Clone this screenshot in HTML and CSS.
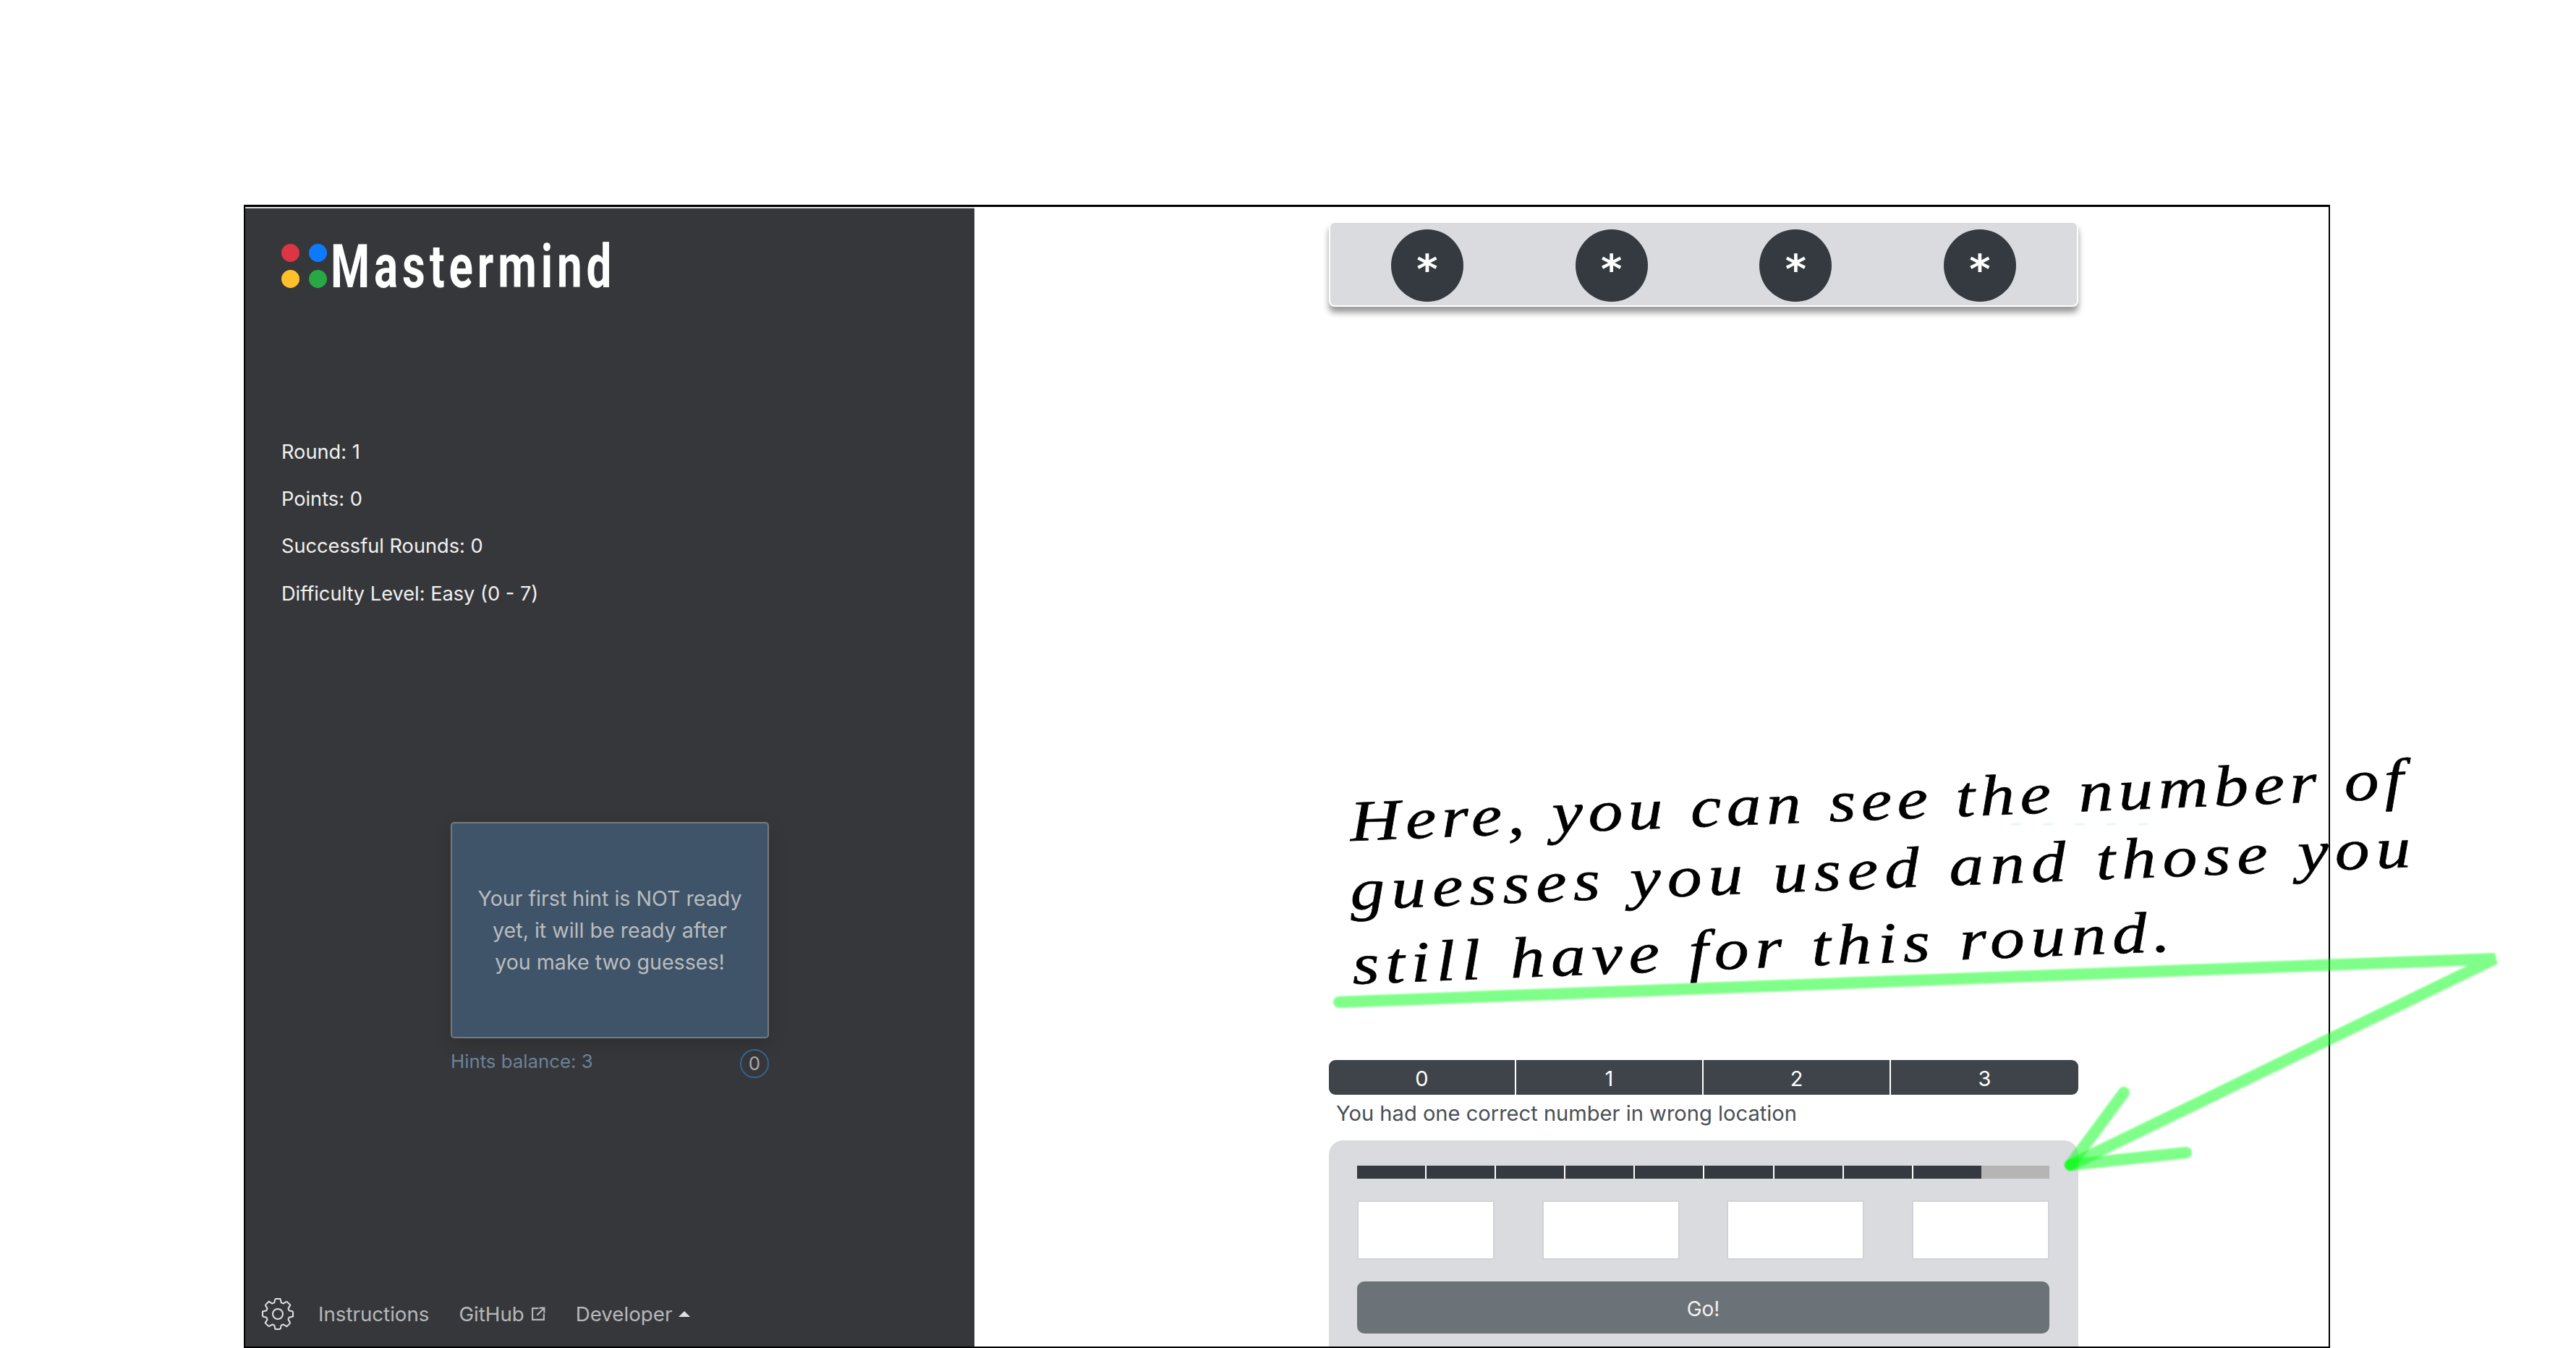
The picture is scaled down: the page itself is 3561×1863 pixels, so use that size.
FILE: index.html
```html
<!DOCTYPE html>
<html lang="en">
<head>
<meta charset="utf-8">
<title>Mastermind</title>
<link rel="stylesheet" href="styles.css">
</head>
<body>
<div class="frame">
  <aside class="sidebar">
    <div class="brand">
      <div class="dots">
        <span class="dot red"></span><span class="dot blue"></span>
        <span class="dot yellow"></span><span class="dot green"></span>
      </div>
      <h1 class="wordmark">Mastermind</h1>
    </div>
    <div class="stats">
      <p>Round: 1</p>
      <p>Points: 0</p>
      <p>Successful Rounds: 0</p>
      <p>Difficulty Level: Easy (0 - 7)</p>
    </div>
    <div class="hint-block">
      <div class="hint-card">Your first hint is NOT ready yet, it will be ready after you make two guesses!</div>
      <div class="hint-meta">
        <span>Hints balance: 3</span>
        <span class="hint-count">0</span>
      </div>
    </div>
    <nav class="footer-nav">
      <svg class="gear" viewBox="-23 -23 46 46" aria-hidden="true">
        <defs><path id="tooth" d="M-3.5-21H3.5L4.8-15.6A16.3 16.3 0 0 1 7.64-14.42L12.37-17.32"/></defs>
        <use href="#tooth"/>
        <use href="#tooth" transform="rotate(45)"/>
        <use href="#tooth" transform="rotate(90)"/>
        <use href="#tooth" transform="rotate(135)"/>
        <use href="#tooth" transform="rotate(180)"/>
        <use href="#tooth" transform="rotate(225)"/>
        <use href="#tooth" transform="rotate(270)"/>
        <use href="#tooth" transform="rotate(315)"/>
        <circle r="7"/>
      </svg>
      <a class="nav-link">Instructions</a>
      <a class="nav-link">GitHub
        <svg class="ext" viewBox="0 0 20 20" aria-hidden="true">
          <path d="M10 3H2V18H17V10"/><path d="M8 12L17 3M11 2.5H17.5V9"/>
        </svg>
      </a>
      <a class="nav-link">Developer<span class="caret"></span></a>
    </nav>
  </aside>
  <main class="board">
    <div class="secret">
      <span class="peg">*</span><span class="peg">*</span><span class="peg">*</span><span class="peg">*</span>
    </div>
    <div class="guess-tabs">
      <span>0</span><span>1</span><span>2</span><span>3</span>
    </div>
    <p class="feedback">You had one correct number in wrong location</p>
    <section class="guess-card">
      <div class="progress">
        <i></i><i></i><i></i><i></i><i></i><i></i><i></i><i></i><i></i><i class="left"></i>
      </div>
      <div class="inputs">
        <input type="text" aria-label="Digit 1"><input type="text" aria-label="Digit 2"><input type="text" aria-label="Digit 3"><input type="text" aria-label="Digit 4">
      </div>
      <button class="go">Go!</button>
    </section>
  </main>
</div>
<svg class="marker" viewBox="0 0 3561 1863" aria-hidden="true">
  <defs><filter id="soft" x="-5%" y="-5%" width="110%" height="110%"><feGaussianBlur stdDeviation="1.3"/></filter></defs>
  <g filter="url(#soft)">
    <path class="stroke" d="M1851 1385L3449 1325L2862 1610"/>
    <path class="stroke" d="M2936 1510L2862 1610"/>
    <path class="stroke" d="M3022 1593L2862 1610"/>
    <path class="faint" d="M2780 1139H2980"/>
  </g>
</svg>
<div class="note">
  <div class="note-line one">Here, you can see the number of</div>
  <div class="note-line two">guesses you used and those you</div>
  <div class="note-line three">still have for this round.</div>
</div>
</body>
</html>
```
FILE: styles.css
```css
* { box-sizing: border-box; }
html, body { margin: 0; height: 100%; }
body {
  background: #fff;
  font-family: Inter, "Noto Sans", sans-serif;
  overflow: hidden;
  padding: 283px 340px 0 337px;
}
.frame {
  display: flex;
  height: 1580px;
  border: solid #000;
  border-width: 3px 2px 2px 2px;
  overflow: hidden;
}
.sidebar {
  width: 1008px;
  flex: none;
  background: #36373a;
  border-top: 2px solid #ddd;
  display: flex;
  flex-direction: column;
  padding: 49px 0 0 50px;
  color: #f1f1f1;
}
.brand { display: flex; align-items: center; height: 60px; gap: 7px; }
.dots { display: grid; grid-template-columns: 25px 25px; gap: 11px 13px; }
.dot { width: 25px; height: 25px; border-radius: 50%; }
.red { background: #dc3545; }
.blue { background: #0d7bff; }
.yellow { background: #ffc02b; }
.green { background: #28a745; }
.wordmark {
  margin: 4px 0 0 -2px;
  font-family: Roboto, sans-serif;
  font-weight: 700;
  font-size: 84px;
  line-height: 60px;
  letter-spacing: 8px;
  color: #fff;
  white-space: nowrap;
  transform: scaleX(.736);
  transform-origin: 0 50%;
}
.stats { margin-top: 211px; font-size: 27.2px; }
.stats p { margin: 0; height: 65.2px; line-height: 34px; }
.hint-block { margin: 267px 0 0 234px; width: 440px; }
.hint-card {
  height: 299px;
  padding: 2px 34px 0;
  display: flex;
  align-items: center;
  text-align: center;
  background: #3f5469;
  border: 2px solid #77797c;
  border-radius: 5px;
  box-shadow: 0 8px 24px rgba(0, 0, 0, .15);
  color: #b9bcbf;
  font-size: 28.6px;
  line-height: 44px;
}
.hint-meta {
  display: flex;
  justify-content: space-between;
  align-items: center;
  margin-top: 15px;
  color: #6c8299;
  font-size: 25.8px;
  line-height: 32px;
}
.hint-meta > span:first-child { margin-top: -6px; }
.hint-count {
  width: 40px;
  height: 40px;
  border: 2px solid #36628f;
  border-radius: 50%;
  display: flex;
  align-items: center;
  justify-content: center;
  color: #a8aaad;
}
.footer-nav {
  margin: auto 0 0 -28px;
  height: 88px;
  display: flex;
  align-items: center;
  padding-bottom: 3px;
  color: #b6b8ba;
  font-size: 27.7px;
}
.gear {
  width: 46px;
  height: 46px;
  margin-right: 33px;
  fill: none;
  stroke: #dfe0e1;
  stroke-width: 2;
  stroke-linejoin: round;
}
.nav-link { display: flex; align-items: center; margin-right: 41px; }
.ext { width: 21px; height: 21px; margin-left: 9px; fill: none; stroke: #b6b8ba; stroke-width: 2; }
.caret {
  margin-left: 9px;
  border: 8px solid transparent;
  border-top: 0;
  border-bottom: 8px solid #dfe0e1;
}
.board { flex: 1; padding: 20px 0 0 490px; display: flex; flex-direction: column; align-items: flex-start; }
.secret {
  width: 1036px;
  height: 118px;
  flex: none;
  display: grid;
  grid-template-columns: repeat(4, 100px);
  justify-content: space-between;
  padding: 9px 84px 0;
  background: #dadbde;
  border: 2px solid #fff;
  border-radius: 8px;
  box-shadow: 0 8px 8px rgba(0, 0, 0, .4);
}
.peg {
  width: 100px;
  height: 100px;
  border-radius: 50%;
  background: #343a40;
  color: #fff;
  display: flex;
  align-items: center;
  justify-content: center;
  padding-top: 8px;
  font-family: "DejaVu Sans", sans-serif;
  font-weight: 700;
  font-size: 56px;
}
.guess-tabs {
  margin-top: 1041px;
  width: 1036px;
  height: 48px;
  flex: none;
  display: grid;
  grid-template-columns: repeat(4, 1fr);
  background: #3e444a;
  border-radius: 9px;
  overflow: hidden;
  color: #fff;
  font-size: 29px;
  line-height: 52px;
  text-align: center;
}
.guess-tabs span { border-right: 2px solid #fff; }
.guess-tabs span:last-child { border-right: 0; }
.feedback { margin: 8px 0 0 10px; color: #495057; font-size: 29.1px; line-height: 36px; }
.guess-card {
  margin-top: 19px;
  width: 1036px;
  flex: none;
  background: #dadbde;
  border-radius: 20px 20px 0 0;
  padding: 35px 40px 40px 39px;
}
.progress { display: flex; height: 18px; }
.progress i { flex: 1; background: #343a40; border-left: 2px solid #fff; }
.progress i:first-child { border-left: 0; }
.progress i.left { background: #b5b5b5; border-left: 0; }
.inputs { display: grid; grid-template-columns: repeat(4, 190px); justify-content: space-between; margin-top: 30px; }
.inputs input { height: 82px; background: #fff; border: 2px solid #cfd2d8; border-radius: 2px; padding: 0; }
.go {
  display: block;
  width: 100%;
  height: 72px;
  margin-top: 30px;
  padding-top: 4px;
  border: 0;
  border-radius: 10px;
  background: #6c7378;
  color: #f1f1f1;
  font-family: inherit;
  font-size: 28px;
}
.marker { position: absolute; left: 0; top: 0; width: 3561px; height: 1863px; pointer-events: none; }
.stroke { fill: none; stroke: #00ff12; stroke-opacity: .5; stroke-width: 16; stroke-linecap: round; stroke-linejoin: miter; }
.faint { fill: none; stroke: #9fe8a6; stroke-opacity: .35; stroke-width: 2; stroke-dasharray: 14 30; }
.note { position: absolute; left: 0; top: 0; }
.note-line {
  position: absolute;
  white-space: nowrap;
  font-family: "Liberation Serif", serif;
  font-style: italic;
  color: #000;
  font-size: 80px;
  line-height: 80px;
  -webkit-text-stroke: .7px #000;
  transform-origin: 0 62px;
  transform: rotate(-2.3deg) scaleX(1.2);
}
.one { left: 1867px; top: 1095px; letter-spacing: 6px; }
.two { left: 1867px; top: 1190px; letter-spacing: 7.3px; }
.three { left: 1870px; top: 1293px; letter-spacing: 7px; }
```
